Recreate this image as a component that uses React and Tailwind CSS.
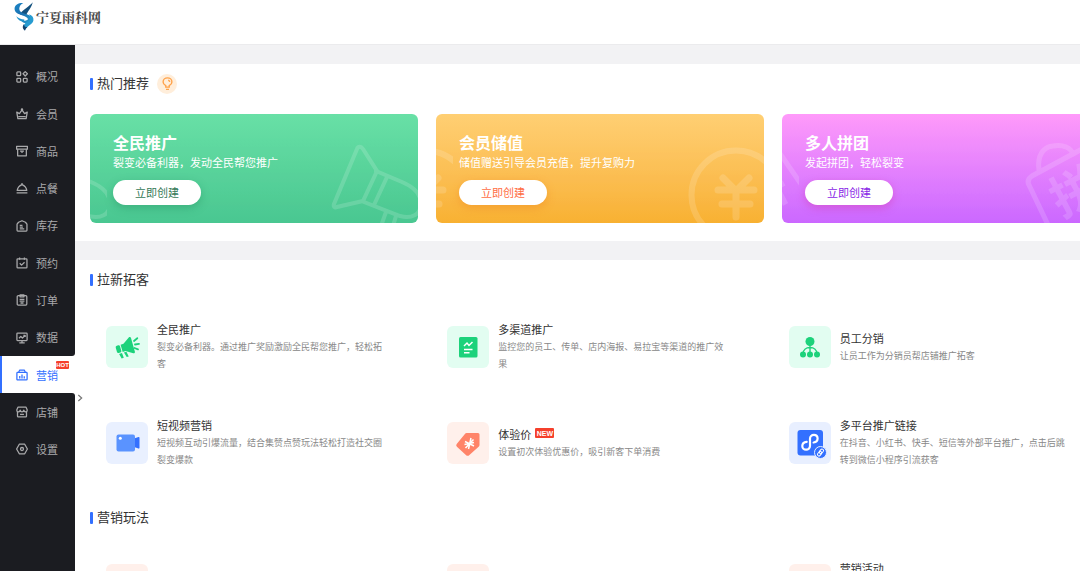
import React from "react";

const menu = [
  { key: "overview", label: "概况" },
  { key: "member", label: "会员" },
  { key: "goods", label: "商品" },
  { key: "dining", label: "点餐" },
  { key: "stock", label: "库存" },
  { key: "booking", label: "预约" },
  { key: "order", label: "订单" },
  { key: "data", label: "数据", edge: "rounded-br-[3px]" },
  { key: "marketing", label: "营销", active: true, hot: true },
  { key: "store", label: "店铺", edge: "rounded-tr-[3px]" },
  { key: "settings", label: "设置" },
];

const menuShapes = {
  overview: (
    <>
      <rect x="1.2" y="1.2" width="5" height="5" rx="1" />
      <rect x="1.2" y="9.8" width="5" height="5" rx="1" />
      <rect x="9.8" y="9.8" width="5" height="5" rx="1" />
      <path d="M12.3 0.8l2.9 2.9-2.9 2.9-2.9-2.9z" />
    </>
  ),
  member: (
    <>
      <path d="M1 5.5l3.6 2L8 2.6l3.4 4.9 3.6-2-1.5 8.7h-11z" />
      <path d="M3 11.5h10" />
      <circle cx="8" cy="2" r="0.8" />
    </>
  ),
  goods: (
    <>
      <rect x="0.8" y="1.8" width="14.4" height="3.8" />
      <path d="M2.2 5.6v8.8h11.6V5.6M5.4 8.2h5.2M8 8.2v2.6" />
    </>
  ),
  dining: (
    <>
      <path d="M1.6 11.2c.6-3.6 3-6.2 6.4-7.6 3.4 1.4 5.8 4 6.4 7.6z" />
      <path d="M0.8 14.5h14.4M8 1.4v2.2" />
    </>
  ),
  stock: (
    <>
      <path d="M1.4 5.6L3.4 3 8 1l4.6 2 2 2.6v8.2a1 1 0 0 1-1 1H2.4a1 1 0 0 1-1-1z" />
      <path d="M5 7.2h3.6M5 9.4h4.2M5 11.8h6" />
    </>
  ),
  booking: (
    <>
      <rect x="1.4" y="2.4" width="13.2" height="12.2" rx="1" />
      <path d="M4.8 0.8v3M11.2 0.8v3M5 8.4l2.4 2.4L11.400 7" />
    </>
  ),
  order: (
    <>
      <rect x="1.6" y="2.2" width="12.8" height="12.6" rx="1.4" />
      <path d="M5.4 1.2h5.2v2.600H5.4zM4.8 7.2h6.4M4.8 9.600h6.4M6 12h4" />
    </>
  ),
  data: (
    <>
      <rect x="1.2" y="1.4" width="13.6" height="10" rx="1" />
      <path d="M4 8.4L6.4 6l2.2 2L12 4.600M9.8 4.4h2.4v2.4M8 11.4v3M4.4 14.6h7.2" />
    </>
  ),
  marketing: (
    <>
      <rect x="1.2" y="4.6" width="13.6" height="10" rx="1" />
      <path d="M3.4 4.6L5 1.4h6l1.6 3.2M5 9.2v3.4M8 7.4v5.2M11 9.6v3" />
    </>
  ),
  store: (
    <>
      <path d="M2 7.6v6a1 1 0 0 0 1 1h10a1 1 0 0 0 1-1v-6" />
      <path d="M2.6 1.6h10.8L15 5.2c0 3.4-4.200 3.4-4.6.4-.4 3-4.4 3-4.8 0C5.200 8.600 1 8.600 1 5.200z" />
      <path d="M5.4 11.2h5.2" />
    </>
  ),
  settings: (
    <>
      <path d="M4.4 1.6h7.2L15.200 8l-3.6 6.4H4.4L0.8 8z" />
      <circle cx="8" cy="8" r="2" />
    </>
  ),
};

function MenuIcon({ name }) {
  return (
    <svg
      viewBox="0 0 16 16"
      className="size-3 shrink-0"
      fill="none"
      stroke="currentColor"
      strokeWidth="1.7"
      strokeLinejoin="round"
      aria-hidden="true"
    >
      {menuShapes[name]}
    </svg>
  );
}

function Logo() {
  return (
    <a href="#home" className="flex items-center gap-0.5">
      <svg viewBox="0 0 58 86" className="h-[29px] w-5" aria-hidden="true">
        <defs>
          <linearGradient id="logoBlue" x1="0" y1="0" x2="1" y2="1">
            <stop offset="0" stopColor="#1a86c8" />
            <stop offset="0.5" stopColor="#1b6fae" />
            <stop offset="1" stopColor="#2aa5d4" />
          </linearGradient>
        </defs>
        <path d="M55 1C52 13 47 20 42 27c-4 6-6 10-6 14l-18-3c2-10 10-13 18-20C44 12 50 7 55 1z" fill="#14527f" />
        <path d="M27 3C14 2 1 8 1 20c0 11 11 16 22 19 9 3 17 6 18 12-6 5-14 6-21 3 3 6 9 9 16 9 10 0 17-7 16-14-1-9-12-12-22-15C21 31 15 28 15 20c0-8 5-13 12-17z" fill="url(#logoBlue)" />
        <path d="M6 42c6 6 14 9 24 10l-1 6C18 58 10 52 6 42z" fill="#1f93cb" />
        <path d="M44 36c9 3 14 9 13 18-2 13-18 15-25 29-6-7-6-13 0-19 7-7 15-8 15-16 0-5-1-9-3-12z" fill="#279bd0" />
        <path d="M29 65c0 7 4 10 10 9-3 3-6 6-7 11-7-5-9-12-3-20z" fill="#12426e" />
      </svg>
      <span className="font-['Noto_Serif_CJK_SC','Noto_Sans_CJK_SC',serif] text-[13px] font-bold text-[#4a4a4a]">宁夏雨科网</span>
    </a>
  );
}

function Sidebar() {
  return (
    <aside className="relative flex w-[75px] shrink-0 flex-col bg-white">
      <div className="h-[13px] shrink-0 bg-[#1b1c21]" />
      <nav className="grid h-[410px] shrink-0 auto-rows-fr">
        {menu.map((m) => (
          <a
            key={m.key}
            href={"#" + m.key}
            aria-current={m.active ? "page" : undefined}
            className={
              m.active
                ? "relative flex items-center gap-2 border-l-2 border-[#3370ff] bg-white pl-[14px] text-[11px] text-[#3370ff]"
                : "relative flex items-center gap-2 bg-[#1b1c21] pl-4 text-[11px] text-[#a9a9ab] " + (m.edge || "")
            }
          >
            <MenuIcon name={m.key} />
            <span>{m.label}</span>
            {m.hot && (
              <span className="absolute top-[5px] right-[6px] flex h-2 w-[13px] items-center justify-center rounded-[1px] bg-[#f5402c] font-['Liberation_Sans'] text-[6px] leading-none font-bold text-white">
                HOT
              </span>
            )}
          </a>
        ))}
      </nav>
      <div className="flex-1 bg-[#1b1c21]" />
      <button
        type="button"
        aria-label="展开"
        className="absolute top-[341px] left-full flex h-6 w-2.5 items-center justify-center rounded-r bg-white text-[#777]"
      >
        <svg viewBox="0 0 8 12" className="h-2 w-1.5" fill="none" stroke="currentColor" strokeWidth="1.8" aria-hidden="true">
          <path d="M1.500 1.500L6.500 6l-5 4.500" />
        </svg>
      </button>
    </aside>
  );
}

function SectionTitle({ children, extra }) {
  return (
    <div className="flex h-[39px] items-center">
      <span className="mr-1 h-3 w-[3px] rounded-[1px] bg-[#3370ff]" />
      <h2 className="pb-0.5 text-[13px] text-[#333]">{children}</h2>
      {extra}
    </div>
  );
}

function Bulb() {
  return (
    <span className="ml-2 flex size-5 items-center justify-center rounded-full bg-[#ffeedb]">
      <svg viewBox="0 0 16 20" className="h-[14px] w-[11px]" fill="none" stroke="#ffa24a" strokeWidth="2" aria-hidden="true">
        <path d="M5.500 14.500v-2C3 11.200 1.600 9.200 1.600 7A6.400 6 0 0 1 14.400 7c0 2.200-1.400 4.200-3.900 5.500v2z" />
        <path d="M5.800 17.800h4.400M9 4.500c1.200.2 2 1 2.300 2.300" />
      </svg>
    </span>
  );
}

const artShapes = {
  horn: (
    <g strokeWidth="4">
      <path d="M267 35L244 90c-1 3 1 4 3 3L273 87 287 57 273 35c-2-3-5-3-6 0z" />
      <path d="M286 57L312 68c12 5 19 13 19 22 0 11-10 15-21 12L274 88" />
      <path d="M297 63L284 91M296 98l-5 14M306 102l-3 10" />
    </g>
  ),
  yen: (
    <>
      <circle cx="300" cy="81" r="44.500" strokeWidth="6" />
      <path d="M287 64l13 13 13-13M282 76h36M286 90h28M300 77v26" strokeWidth="7" />
    </>
  ),
  bag: (
    <>
      <path d="M257 56c-2-14 4-23 14-24 10-2 18 2 20 8" strokeWidth="5" />
      <path d="M267 113L247 71c-2-4 0-7 3-9L300 35c4-2 6-1 8 3L330 70" strokeWidth="5" />
      <text x="293" y="95" transform="rotate(-28 293 78)" textAnchor="middle" fontSize="48" fontWeight="700" fill="currentColor" stroke="none">
        拼
      </text>
    </>
  ),
};

function CardArt({ name }) {
  return (
    <svg
      viewBox="0 0 328 109"
      preserveAspectRatio="xMaxYMid slice"
      className="absolute inset-0 size-full text-white opacity-15"
      fill="none"
      stroke="currentColor"
      strokeLinecap="round"
      aria-hidden="true"
    >
      <defs>
        <clipPath id={"edge-" + name}>
          <rect x="0" y="0" width="17" height="109" />
        </clipPath>
      </defs>
      {artShapes[name]}
      <g clipPath={"url(#edge-" + name + ")"}>
        <g transform="translate(-311 0)">{artShapes[name]}</g>
      </g>
    </svg>
  );
}

const cards = [
  {
    title: "全民推广",
    desc: "裂变必备利器，发动全民帮您推广",
    art: "horn",
    bg: "from-[#68e0a6] to-[#4ac791]",
    btn: "text-[#357a58] shadow-[0_3px_8px_rgba(30,130,85,0.35)]",
  },
  {
    title: "会员储值",
    desc: "储值赠送引导会员充值，提升复购力",
    art: "yen",
    bg: "from-[#ffcf73] to-[#f8b132]",
    btn: "text-[#ff6d45] shadow-[0_3px_8px_rgba(240,130,30,0.4)]",
  },
  {
    title: "多人拼团",
    desc: "发起拼团，轻松裂变",
    art: "bag",
    bg: "from-[#ff9afa] to-[#cb68ff]",
    btn: "text-[#8a1fe6] shadow-[0_3px_8px_rgba(210,50,160,0.4)]",
  },
];

function PromoCard({ card }) {
  return (
    <article className={"relative h-[109px] overflow-hidden rounded-md bg-linear-to-b pt-[18px] pl-[23px] text-white " + card.bg}>
      <CardArt name={card.art} />
      <div className="relative">
        <h3 className="text-base leading-5 font-bold">{card.title}</h3>
        <p className="mt-0.5 text-[11px] leading-4">{card.desc}</p>
        <button type="button" className={"mt-[10px] h-[25px] w-[88px] rounded-full bg-white text-[11px] " + card.btn}>
          立即创建
        </button>
      </div>
    </article>
  );
}

const featureShapes = {
  horn: (
    <>
      <g fill="#1cd27b" transform="rotate(-16 21 21)">
        <rect x="10" y="17" width="4.500" height="7.500" rx="1.500" />
        <path d="M15.500 17h3l6.800-4.700c1-.6 2 0 2 1v14.400c0 1-1 1.600-2 1l-6.800-4.200h-3z" />
        <path d="M11.500 25.500h3l.4 5h-2.200zM16.500 25.500h2.600l1 5H18z" />
      </g>
      <path d="M28 15l3.300-2.800M29 18.500l4-.7M28.500 22l3.500 1.400" stroke="#1cd27b" strokeWidth="1.800" strokeLinecap="round" />
    </>
  ),
  channel: (
    <>
      <rect x="12" y="11" width="18.500" height="20.500" rx="1.500" fill="#1cd27b" />
      <path d="M17 20l3-3 2 2.500 3.500-3.500M17 23.500h8.500M17 26.700h5.500" fill="none" stroke="#fff" strokeWidth="1.500" />
    </>
  ),
  tree: (
    <>
      <path d="M21 18v9M14 28c0-4 3-6.500 7-6.500s7 2.500 7 6.500" fill="none" stroke="#1cd27b" strokeWidth="1.400" />
      <circle cx="21" cy="15.500" r="4.500" fill="#1cd27b" />
      <circle cx="14" cy="28.500" r="3" fill="#1cd27b" />
      <circle cx="21" cy="28.500" r="3" fill="#1cd27b" />
      <circle cx="28" cy="28.500" r="3" fill="#1cd27b" />
    </>
  ),
  video: (
    <>
      <path d="M28 16.500l4.500-1.500c.7-.2 1 .2 1 .8v10c0 .6-.3 1-1 .8L28 25z" fill="#3370ff" />
      <rect x="10.500" y="12.500" width="18.500" height="17" rx="2" fill="#5a93ff" />
      <circle cx="14.300" cy="16.200" r="1.500" fill="#fff" />
    </>
  ),
  price: (
    <>
      <path d="M20 11h11a1.500 1.500 0 0 1 1.500 1.500v10.500a2 2 0 0 1-.6 1.400l-9.500 8.600a2.500 2.500 0 0 1-3.500 0l-9-8.300a2 2 0 0 1 0-2.900l8.200-10a2 2 0 0 1 1.400-.8z" fill="#ff8469" />
      <path d="M24 16l-2.500 11M18 19.500l9 4.500M18.500 26l8-8.500M17.500 22.500l9.500-2" stroke="#fff" strokeWidth="1.500" />
    </>
  ),
  link: (
    <>
      <rect x="8.500" y="8" width="25.500" height="25.500" rx="3" fill="#3370ff" />
      <path d="M17.700 19.800c-2.700.3-4.400 2-4.400 4.100 0 2.200 1.700 3.800 3.800 3.800s3.900-1.600 3.900-3.900v-7c0-2.300 1.700-3.900 3.900-3.900s3.700 1.600 3.700 3.700c0 2.100-1.600 3.600-4 3.900" fill="none" stroke="#fff" strokeWidth="2.200" strokeLinecap="round" />
      <circle cx="31.500" cy="30.500" r="6" fill="#3370ff" stroke="#e8efff" />
      <g transform="rotate(-52 31.500 30.500)" fill="none" stroke="#fff" strokeWidth="1">
        <rect x="27.500" y="29" width="5" height="3" rx="1.500" />
        <rect x="30.500" y="29" width="5" height="3" rx="1.500" />
      </g>
    </>
  ),
};

const growth = [
  { title: "全民推广", desc: "裂变必备利器。通过推广奖励激励全民帮您推广，轻松拓客", icon: "horn", tint: "bg-[#e2fdf1]" },
  { title: "多渠道推广", desc: "监控您的员工、传单、店内海报、易拉宝等渠道的推广效果", icon: "channel", tint: "bg-[#e2fdf1]" },
  { title: "员工分销", desc: "让员工作为分销员帮店铺推广拓客", icon: "tree", tint: "bg-[#e2fdf1]" },
  { title: "短视频营销", desc: "短视频互动引爆流量，结合集赞点赞玩法轻松打造社交圈裂变爆款", icon: "video", tint: "bg-[#e9f0ff]" },
  { title: "体验价", desc: "设置初次体验优惠价，吸引新客下单消费", icon: "price", tint: "bg-[#fff0eb]", isNew: true },
  { title: "多平台推广链接", desc: "在抖音、小红书、快手、短信等外部平台推广，点击后跳转到微信小程序引流获客", icon: "link", tint: "bg-[#e8efff]" },
];

function Feature({ item }) {
  return (
    <a href="#feature" className="flex h-24 items-center gap-[9px] pl-4">
      <span className={"size-[42px] shrink-0 rounded-md " + item.tint}>
        <svg viewBox="0 0 42 42" className="size-full" aria-hidden="true">
          {featureShapes[item.icon]}
        </svg>
      </span>
      <span className="flex max-w-[232px] flex-col pb-px">
        <span className="flex h-[17px] items-center gap-1 text-[11px] text-[#333]">
          {item.title}
          {item.isNew && (
            <span className="mb-0.5 flex h-2.5 w-[19px] items-center justify-center rounded-[1px] bg-[#f5402c] font-['Liberation_Sans'] text-[7px] leading-none font-bold text-white">
              NEW
            </span>
          )}
        </span>
        <span className="text-[9px] leading-[17px] text-[#888]">{item.desc}</span>
      </span>
    </a>
  );
}

function PlayFeature({ title }) {
  return (
    <a href="#play" className="flex h-24 items-center gap-[9px] pl-4">
      <span className="size-[42px] shrink-0 rounded-md bg-[#fff0eb]" />
      {title && <span className="h-[51px] text-[11px] leading-[17px] text-[#333]">{title}</span>}
    </a>
  );
}

export default function App() {
  return (
    <div className="flex h-screen flex-col overflow-hidden bg-white font-['Noto_Sans_CJK_SC',sans-serif]">
      <header className="flex h-[45px] shrink-0 items-center border-b border-[#ebebed] pb-[11px] pl-[14px]">
        <Logo />
      </header>
      <div className="flex min-h-0 flex-1">
        <Sidebar />
        <main className="min-w-0 flex-1 overflow-hidden bg-[#f2f2f4] pt-[19px]">
          <div className="flex min-w-[1054px] flex-col gap-[19px]">
            <section className="bg-white px-[15px] pb-[18px]">
              <SectionTitle extra={<Bulb />}>热门推荐</SectionTitle>
              <div className="mt-[11px] grid grid-cols-3 gap-[18px] pr-1">
                {cards.map((c) => (
                  <PromoCard key={c.title} card={c} />
                ))}
              </div>
            </section>
            <div className="flex flex-col gap-[7px] bg-white px-[15px]">
              <section>
                <SectionTitle>拉新拓客</SectionTitle>
                <div className="grid grid-cols-3">
                  {growth.map((g) => (
                    <Feature key={g.title} item={g} />
                  ))}
                </div>
              </section>
              <section>
                <SectionTitle>营销玩法</SectionTitle>
                <div className="grid grid-cols-3">
                  <PlayFeature />
                  <PlayFeature />
                  <PlayFeature title="营销活动" />
                </div>
              </section>
            </div>
          </div>
        </main>
      </div>
    </div>
  );
}
